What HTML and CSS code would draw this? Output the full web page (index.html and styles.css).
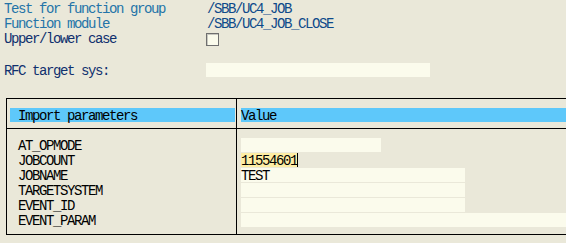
FILE: index.html
```html
<!DOCTYPE html>
<html lang="en">
<head>
    <meta charset="UTF-8">
    <meta name="viewport" content="width=device-width, initial-scale=1.0">
    <title>Test Function Module</title>
    <link rel="stylesheet" href="styles.css">
</head>
<body>
    <div class="head">
        <div class="row">
            <span class="lbl lbl-info">Test for function group</span>
            <span class="val">/SBB/UC4_JOB</span>
        </div>
        <div class="row">
            <span class="lbl lbl-info">Function module</span>
            <span class="val">/SBB/UC4_JOB_CLOSE</span>
        </div>
        <div class="row">
            <span class="lbl">Upper/lower case</span>
            <span class="check"></span>
        </div>
        <div class="row row-rfc">
            <span class="lbl">RFC target sys:</span>
            <span class="field w32"></span>
        </div>
    </div>

    <div class="params">
        <div class="params-head">
            <div class="col-left">
                <div class="hbar hbar-left">Import parameters</div>
            </div>
            <div class="col-right">
                <div class="hbar hbar-right">Value</div>
            </div>
        </div>
        <div class="params-body">
            <div class="col-left">
                <div class="prow">AT_OPMODE</div>
                <div class="prow">JOBCOUNT</div>
                <div class="prow">JOBNAME</div>
                <div class="prow">TARGETSYSTEM</div>
                <div class="prow">EVENT_ID</div>
                <div class="prow">EVENT_PARAM</div>
            </div>
            <div class="col-right">
                <div class="field w20"></div>
                <div class="field w8 active">11554601<span class="cursor"></span></div>
                <div class="field w32">TEST</div>
                <div class="field w32"></div>
                <div class="field w32"></div>
                <div class="field w64"></div>
            </div>
        </div>
    </div>
</body>
</html>
```

FILE: styles.css
```css
body {
    margin: 0;
    padding: 0;
    background-color: #eae8d9;
    font-family: "Liberation Mono", monospace;
    font-size: 14px;
    letter-spacing: -1.4px;
    color: #000;
    overflow: hidden;
}

.head {
    padding: 0 0 0 4px;
}

.row {
    display: flex;
    align-items: flex-start;
    height: 15px;
    line-height: 19px;
}

.row-rfc {
    margin-top: 17px;
}

.row-rfc .field {
    margin-top: 1px;
}

.lbl {
    width: 202px;
    color: #10306e;
}

.lbl-info {
    color: #2474a8;
}

.val {
    color: #0e4a8a;
    margin-left: 1px;
}

.check {
    width: 11px;
    height: 11px;
    border: 1px solid #6f6f6f;
    background-color: #fbfbec;
    box-shadow: inset 1px 1px 0 #c8c8c0;
    margin-top: 3px;
}

.field {
    height: 14px;
    line-height: 16px;
    background-color: #fbfbec;
    white-space: nowrap;
    position: relative;
}

.w8 { width: 56px; }
.w20 { width: 140px; }
.w32 { width: 224px; }
.w64 { width: 448px; }

.field.active {
    background-color: #fdeda4;
}

.cursor {
    position: absolute;
    top: 0;
    left: 56px;
    width: 1px;
    height: 14px;
    background-color: #000;
}

.params {
    margin: 21px 0 0 6px;
    border: 1px solid #000;
    border-right: none;
}

.params-head,
.params-body {
    display: flex;
}

.params-head {
    border-bottom: 1px solid #000;
}

.col-left {
    width: 229px;
    border-right: 1px solid #000;
}

.col-right {
    flex: 1;
    min-width: 0;
    overflow: hidden;
}

.params-head .col-left,
.params-head .col-right {
    padding: 9px 0 6px;
}

.params-body .col-left,
.params-body .col-right {
    padding: 9px 0 6px;
}

.hbar {
    height: 14px;
    line-height: 16px;
    background-color: #5ec8fa;
}

.hbar-left {
    margin: 0 1px 0 3px;
    padding-left: 8px;
}

.hbar-right {
    margin-left: 4px;
}

.prow {
    height: 15px;
    line-height: 16px;
    padding-left: 11px;
}

.params-body .col-right {
    padding-left: 4px;
}

.params-body .field {
    margin-bottom: 1px;
}
```
